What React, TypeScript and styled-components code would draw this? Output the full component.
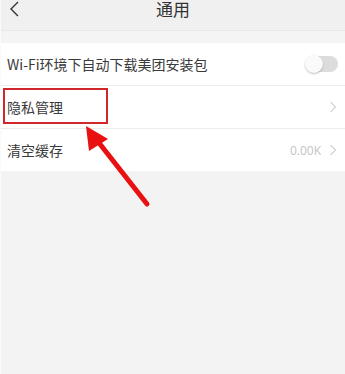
import React from "react";
import styled, { createGlobalStyle } from "styled-components";

const GlobalStyle = createGlobalStyle`
  html, body {
    margin: 0;
    padding: 0;
    background: #f3f3f3;
  }
  body {
    font-family: "Noto Sans CJK SC", "Liberation Sans", sans-serif;
  }
`;

const Page = styled.div`
  position: relative;
  width: 345px;
  height: 374px;
  overflow: hidden;
  background: #f3f3f3;
  border-left: 1px solid #fafafa;
  box-sizing: border-box;
`;

const Header = styled.div`
  position: relative;
  display: flex;
  align-items: flex-start;
  justify-content: center;
  height: 31px;
  background: #f0f0f0;
  border-bottom: 1px solid #e8e8e8;
  box-sizing: border-box;
`;

const BackIcon = styled.svg`
  position: absolute;
  left: 8px;
  top: 1px;
`;

const Title = styled.div`
  padding-top: 0;
  font-size: 17px;
  line-height: 18px;
  color: #333;
`;

const Spacer = styled.div`
  height: 12px;
  background: #f4f4f4;
`;

const List = styled.div`
  background: #fff;
`;

const Row = styled.div<{ $last?: boolean }>`
  position: relative;
  display: flex;
  align-items: center;
  height: 42px;
  padding: 0 8px 0 6px;
  border-bottom: ${(p) => (p.$last ? "none" : "1px solid #ececec")};
  box-sizing: content-box;
`;

const Label = styled.div`
  flex: 1;
  font-size: 14px;
  color: #3a3a3a;
`;

const Value = styled.span`
  font-size: 12px;
  color: #c4c4c4;
  margin-right: 8px;
  font-family: "Open Sans", sans-serif;
`;

const Toggle = styled.div`
  position: relative;
  width: 32px;
  height: 16px;
  border-radius: 8px;
  background: #dcdcdc;
  margin-right: -1px;
`;

const Knob = styled.div`
  position: absolute;
  left: -1px;
  top: -1px;
  width: 18px;
  height: 18px;
  border-radius: 50%;
  background: #fafafa;
  box-shadow: 0 1px 2px rgba(0, 0, 0, 0.25);
`;

const Highlight = styled.div`
  position: absolute;
  left: 2px;
  top: 2px;
  width: 101px;
  height: 32px;
  border: 2px solid #d0262c;
`;

const Arrow = styled.svg`
  position: absolute;
  left: 0;
  top: 0;
  pointer-events: none;
`;

const Chevron = () => (
  <svg width="8" height="12" viewBox="0 0 8 12">
    <path d="M1.5 1 L6.5 6 L1.5 11" fill="none" stroke="#b5b5b5" strokeWidth="1" />
  </svg>
);

export default function App() {
  return (
    <>
      <GlobalStyle />
      <Page>
        <Header>
          <BackIcon width="12" height="16" viewBox="0 0 12 16">
            <path d="M9 1 L2 8 L9 15" fill="none" stroke="#333" strokeWidth="1.4" />
          </BackIcon>
          <Title>通用</Title>
        </Header>
        <Spacer />
        <List>
          <Row>
            <Label>Wi-Fi环境下自动下载美团安装包</Label>
            <Toggle>
              <Knob />
            </Toggle>
          </Row>
          <Row>
            <Label>隐私管理</Label>
            <Chevron />
            <Highlight />
          </Row>
          <Row $last>
            <Label>清空缓存</Label>
            <Value>0.00K</Value>
            <Chevron />
          </Row>
        </List>
        <Arrow width="345" height="374" viewBox="0 0 345 374">
          <line x1="146" y1="204" x2="95" y2="139" stroke="#e81010" strokeWidth="5" strokeLinecap="round" />
          <polygon points="85,126 107,139 88,151" fill="#e81010" />
        </Arrow>
      </Page>
    </>
  );
}
